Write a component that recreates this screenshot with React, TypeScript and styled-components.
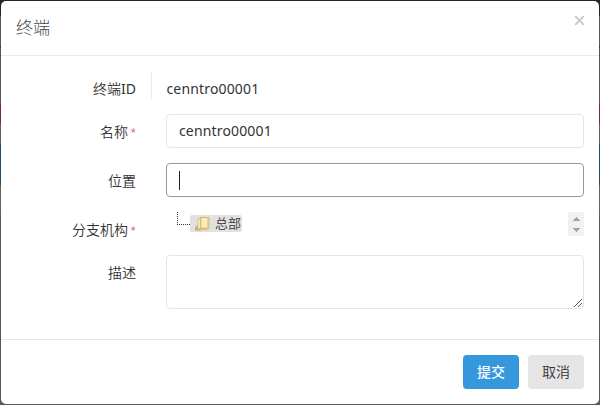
import React from "react";
import styled, { createGlobalStyle } from "styled-components";

const GlobalStyle = createGlobalStyle`
  * { box-sizing: border-box; }
  body {
    margin: 0;
    background: #58595c;
    color: #333;
    font: 14px/20px "Noto Sans", "Noto Sans CJK SC", sans-serif;
  }
`;

const Backdrop = styled.div`
  width: 600px;
  height: 405px;
  padding: 1px;
  overflow: hidden;
  background:
    linear-gradient(#24252d 0 16px, #55565a 16px 46px, #3c3e45 46px 48px,
      #55565a 48px 104px, #7a2f38 104px 124px, #606164 124px 144px,
      #1c4e6e 144px 185px, #6c6259 185px 215px, #58595c 215px);
`;

const Dialog = styled.section`
  display: flex;
  flex-direction: column;
  width: 598px;
  height: 403px;
  border-radius: 5px;
  background: #fff;
`;

const Header = styled.header`
  display: flex;
  justify-content: space-between;
  height: 55px;
  padding: 0 14px 0 15px;
  border-bottom: 1px solid #e9e9e9;
`;

const Title = styled.h4`
  margin: 0;
  font-size: 17px;
  font-weight: 300;
  line-height: 53px;
  color: #444;
`;

const Close = styled.button`
  width: 11px;
  height: 11px;
  margin: 14px 0 0;
  padding: 0;
  border: 0;
  background: none;
  svg { display: block; }
`;

const Form = styled.form`
  display: grid;
  grid-template-columns: 135px 418px;
  grid-template-rows: 28px 34px 34px 28px 54px;
  column-gap: 30px;
  row-gap: 15px;
  height: 283px;
  padding-top: 15px;
`;

const Label = styled.label`
  display: flex;
  justify-content: flex-end;
  height: 20px;
  margin-top: 8px;
  font-weight: 350;
  white-space: nowrap;
`;

const Latin = styled.span`
  font-weight: 400;
`;

const Required = styled.span`
  width: 8px;
  font-size: 10px;
  line-height: 20px;
  text-align: right;
  color: #e02222;
`;

const StaticValue = styled.div`
  height: 27px;
  margin: 1px 0 0 -15px;
  padding-left: 14.5px;
  border-left: 1px solid #ebebeb;
  letter-spacing: 0.15px;
  line-height: 33px;
`;

const Field = styled.div<{ $focused?: boolean }>`
  display: flex;
  align-items: center;
  height: 34px;
  padding: 0 12px;
  border: 1px solid ${(p) => (p.$focused ? "#999" : "#e5e5e5")};
  border-radius: 4px;
  letter-spacing: 0.15px;
`;

const Caret = styled.span`
  width: 1px;
  height: 19px;
  background: #222;
`;

const Tree = styled.div`
  display: flex;
  align-items: flex-start;
  height: 24px;
  padding-left: 11px;
`;

const Branch = styled.span`
  width: 13px;
  height: 13px;
  border-left: 1px dotted #333;
  border-bottom: 1px dotted #333;
`;

const TreeNode = styled.span`
  display: flex;
  align-items: center;
  gap: 4px;
  width: 52px;
  height: 17px;
  margin-top: 3px;
  padding-left: 4px;
  border-radius: 2px;
  background: #e1e1e1;
  font-size: 13px;
  line-height: 17px;
  font-weight: 350;
  white-space: nowrap;
  svg { flex: none; }
`;

const Spinner = styled.div`
  display: flex;
  flex-direction: column;
  align-items: center;
  justify-content: space-between;
  width: 16px;
  height: 24px;
  margin-left: auto;
  padding: 5px 0 4px;
  background: #f1f1f1;
`;

const TextBox = styled.div`
  display: flex;
  align-items: flex-end;
  justify-content: flex-end;
  height: 54px;
  border: 1px solid #e5e5e5;
  border-radius: 4px;
`;

const Footer = styled.footer`
  display: flex;
  justify-content: flex-end;
  gap: 9px;
  height: 65px;
  padding: 15px 15px 0;
  border-top: 1px solid #e5e5e5;
`;

const Button = styled.button<{ $primary?: boolean }>`
  width: 56px;
  height: 34px;
  padding: 0;
  border: 0;
  border-radius: 4px;
  background: ${(p) => (p.$primary ? "#3598dc" : "#e5e5e5")};
  color: ${(p) => (p.$primary ? "#fff" : "#333")};
  font: inherit;
  font-weight: ${(p) => (p.$primary ? 500 : 350)};
`;

const FolderIcon = () => (
  <svg width="17" height="16" viewBox="0 0 17 16">
    <path d="M1 14.5v-3L3.5 9V3L7 1v13.5z" fill="#c9ad6a" />
    <path d="M4 3.4 6.5 2v9L4 13.5z" fill="#f3e6b4" />
    <path d="M7 1.5h8v11l-1 1H7z" fill="#ecd596" stroke="#cdb06a" strokeWidth=".8" />
    <path d="M7.5 2h5.5l-.5 10.5-5 1z" fill="#fbeebb" />
    <path d="M5.5 12.5 8 11.5h5v2.5H5.5z" fill="#dcc079" />
  </svg>
);

const Arrow = ({ down = false }: { down?: boolean }) => (
  <svg width="8" height="4" viewBox="0 0 8 4" shapeRendering="crispEdges">
    <path d={down ? "M0 0h8L4 4z" : "M4 0l4 4H0z"} fill="#a3a3a3" />
  </svg>
);

export default function App() {
  return (
    <>
      <GlobalStyle />
      <Backdrop>
        <Dialog role="dialog">
          <Header>
            <Title>终端</Title>
            <Close type="button" aria-label="关闭">
              <svg width="11" height="11" viewBox="0 0 11 11">
                <path d="M1.2 1.2l8.6 8.6M9.8 1.2L1.2 9.8" stroke="#c8c8c8" strokeWidth="1.9" />
              </svg>
            </Close>
          </Header>
          <Form>
            <Label>终端<Latin>ID</Latin></Label>
            <StaticValue>cenntro00001</StaticValue>
            <Label>名称<Required>*</Required></Label>
            <Field>cenntro00001</Field>
            <Label>位置</Label>
            <Field $focused><Caret /></Field>
            <Label>分支机构<Required>*</Required></Label>
            <Tree>
              <Branch />
              <TreeNode><FolderIcon />总部</TreeNode>
              <Spinner><Arrow /><Arrow down /></Spinner>
            </Tree>
            <Label>描述</Label>
            <TextBox>
              <svg width="9" height="9" viewBox="0 0 9 9" shapeRendering="crispEdges">
                <path d="M0 8l8-8M4 8l4-4" stroke="#555" />
              </svg>
            </TextBox>
          </Form>
          <Footer>
            <Button type="button" $primary>提交</Button>
            <Button type="button">取消</Button>
          </Footer>
        </Dialog>
      </Backdrop>
    </>
  );
}
